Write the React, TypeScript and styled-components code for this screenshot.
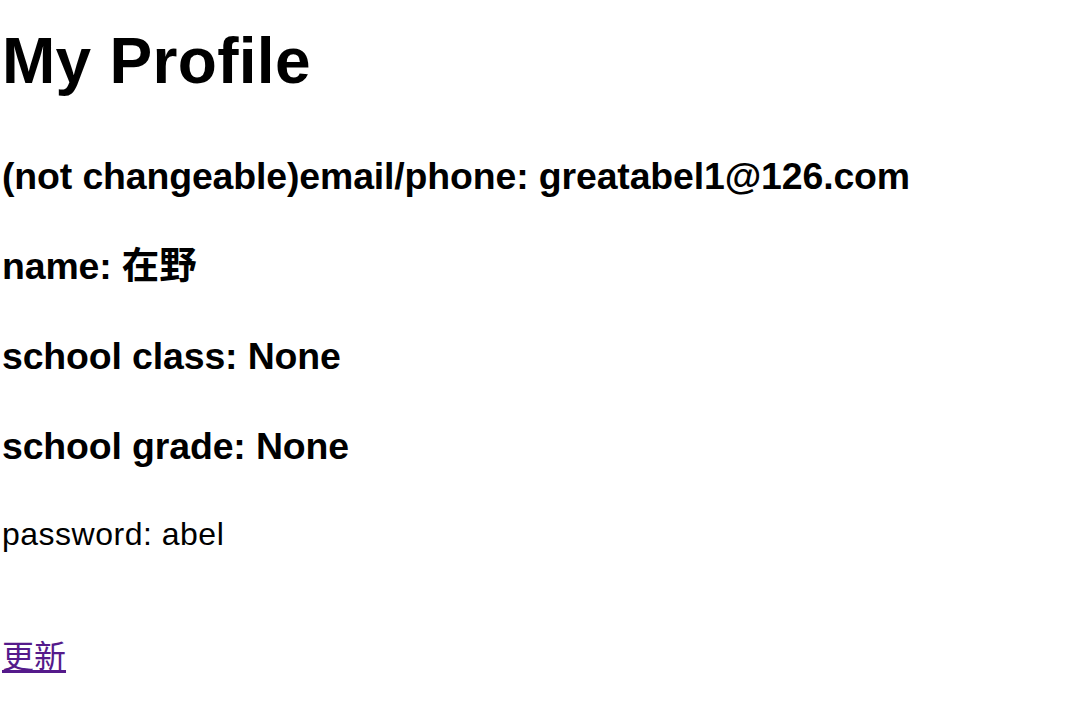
import React from 'react'
import styled, { createGlobalStyle } from 'styled-components'

const GlobalStyle = createGlobalStyle`
  body {
    margin: 0;
    background: #ffffff;
    color: #000000;
    font-family: 'Liberation Sans', 'Noto Sans CJK SC', sans-serif;
  }
`

const Page = styled.div`
  display: flex;
  flex-direction: column;
  align-items: flex-start;
  padding: 25px 0 0 2px;
`

const Title = styled.h1`
  margin: 0;
  font-size: 64px;
  line-height: 72px;
  font-weight: 700;
  letter-spacing: 0.3px;
`

const FieldList = styled.div`
  display: flex;
  flex-direction: column;
  gap: 38px;
  margin-top: 53px;
`

const Field = styled.h3`
  margin: 0;
  font-size: 37.44px;
  line-height: 52px;
  font-weight: 700;
  letter-spacing: -0.13px;
`

const Plain = styled.p`
  margin: 42px 0 0;
  font-size: 32px;
  line-height: 40px;
  letter-spacing: 0.5px;
`

const UpdateLink = styled.a`
  margin-top: 83px;
  font-size: 32px;
  line-height: 40px;
  color: #551a8b;
  text-decoration: underline;
`

interface Profile {
  email: string,
  name: string,
  schoolClass: string,
  schoolGrade: string,
  password: string,
}

const profile: Profile = {
  email: 'greatabel1@126.com',
  name: '在野',
  schoolClass: 'None',
  schoolGrade: 'None',
  password: 'abel',
}

const App: React.FC = () => {
  return (
    <>
      <GlobalStyle />
      <Page>
        <Title>My Profile</Title>
        <FieldList>
          <Field>(not changeable)email/phone: {profile.email}</Field>
          <Field>name: {profile.name}</Field>
          <Field>school class: {profile.schoolClass}</Field>
          <Field>school grade: {profile.schoolGrade}</Field>
        </FieldList>
        <Plain>password: {profile.password}</Plain>
        <UpdateLink href="#">更新</UpdateLink>
      </Page>
    </>
  )
}

export default App
